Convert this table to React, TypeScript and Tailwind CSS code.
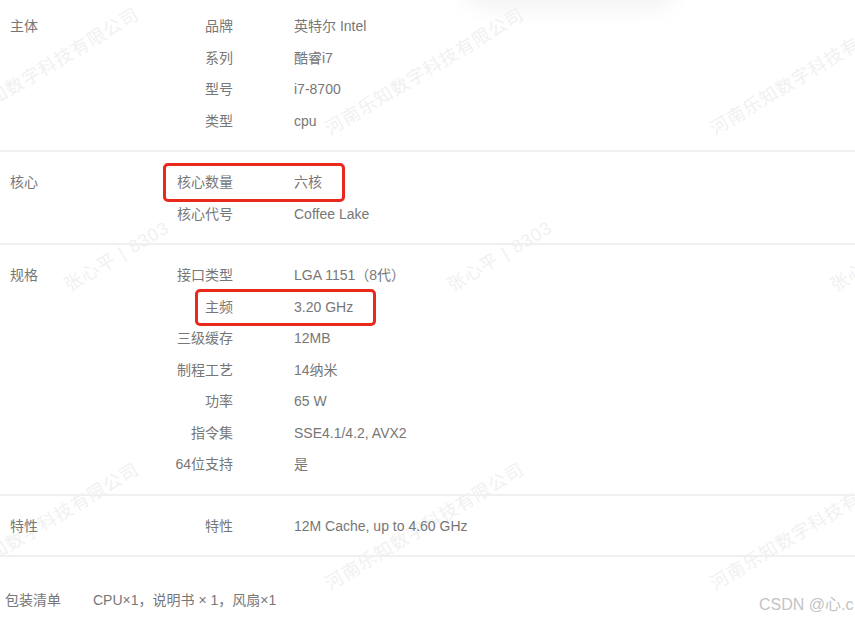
import React from "react";

interface SpecRow {
  label: string;
  value: string;
  highlight?: "core" | "freq";
}

interface SpecGroup {
  title: string;
  rows: SpecRow[];
  first?: boolean;
}

const groups: SpecGroup[] = [
  {
    title: "主体",
    first: true,
    rows: [
      { label: "品牌", value: "英特尔 Intel" },
      { label: "系列", value: "酷睿i7" },
      { label: "型号", value: "i7-8700" },
      { label: "类型", value: "cpu" },
    ],
  },
  {
    title: "核心",
    rows: [
      { label: "核心数量", value: "六核", highlight: "core" },
      { label: "核心代号", value: "Coffee Lake" },
    ],
  },
  {
    title: "规格",
    rows: [
      { label: "接口类型", value: "LGA 1151（8代）" },
      { label: "主频", value: "3.20 GHz", highlight: "freq" },
      { label: "三级缓存", value: "12MB" },
      { label: "制程工艺", value: "14纳米" },
      { label: "功率", value: "65 W" },
      { label: "指令集", value: "SSE4.1/4.2, AVX2" },
      { label: "64位支持", value: "是" },
    ],
  },
  {
    title: "特性",
    rows: [{ label: "特性", value: "12M Cache, up to 4.60 GHz" }],
  },
];

// watermark centers (x, y) in page coordinates
const companyMarks = [
  [40, 72],
  [425, 72],
  [810, 72],
  [40, 527],
  [425, 527],
  [810, 527],
];
const nameMarks = [
  [117, 257],
  [500, 257],
  [883, 257],
];

function Watermark({ x, y, text }: { x: number; y: number; text: string }) {
  return (
    <div
      className="absolute pointer-events-none whitespace-nowrap text-[18px] tracking-[1px] text-[#f1f1f1] -translate-x-1/2 -translate-y-1/2 -rotate-[31deg]"
      style={{ left: x, top: y }}
    >
      {text}
    </div>
  );
}

function Row({ row }: { row: SpecRow }) {
  return (
    <div className="relative flex h-[31.5px] items-center">
      <div className="w-[103px] shrink-0 text-right">{row.label}</div>
      <div className="pl-[61px] whitespace-nowrap">{row.value}</div>
      {row.highlight === "core" && (
        <div className="absolute left-[33px] top-[-4px] h-[39px] w-[182px] rounded-[5px] border-[3px] border-[#e8291c]" />
      )}
      {row.highlight === "freq" && (
        <div className="absolute left-[65px] top-[-3px] h-[37px] w-[181px] rounded-[5px] border-[3px] border-[#e8291c]" />
      )}
    </div>
  );
}

export default function App() {
  return (
    <div
      className="relative h-[619px] w-[855px] overflow-hidden bg-white text-[14px] text-[#777777]"
      style={{ fontFamily: '"Liberation Sans", "Noto Sans CJK SC", sans-serif' }}
    >
      {/* faint shadow of something above the crop */}
      <div className="absolute left-[465px] top-[-40px] h-[40px] w-[210px] rounded-full bg-white shadow-[0_6px_26px_rgba(0,0,0,0.06)]" />

      {/* watermarks sit behind the table text */}
      {companyMarks.map(([x, y], i) => (
        <Watermark key={"c" + i} x={x} y={y} text="河南乐知数字科技有限公司" />
      ))}
      {nameMarks.map(([x, y], i) => (
        <Watermark key={"n" + i} x={x} y={y} text="张心平 | 8303" />
      ))}

      <div className="relative">
        {groups.map((g) => (
          <div
            key={g.title}
            className={
              "flex border-b-2 border-[#f0f0f0] pb-[13px] pl-[10px] " +
              (g.first ? "pt-[11px]" : "pt-[15px]")
            }
          >
            <div className="flex h-[31.5px] w-[120px] shrink-0 items-center">{g.title}</div>
            <div className="flex flex-col">
              {g.rows.map((r) => (
                <Row key={r.label} row={r} />
              ))}
            </div>
          </div>
        ))}

        <div className="flex h-[31.5px] items-center pl-[5px] mt-[28px]">
          <div className="w-[88px] shrink-0">包装清单</div>
          <div className="whitespace-nowrap">CPU×1，说明书 × 1，风扇×1</div>
        </div>
      </div>

      <div className="absolute left-[759px] top-[593px] whitespace-nowrap text-[16px] text-[#c4c4c4]">
        CSDN @心.c
      </div>
    </div>
  );
}
